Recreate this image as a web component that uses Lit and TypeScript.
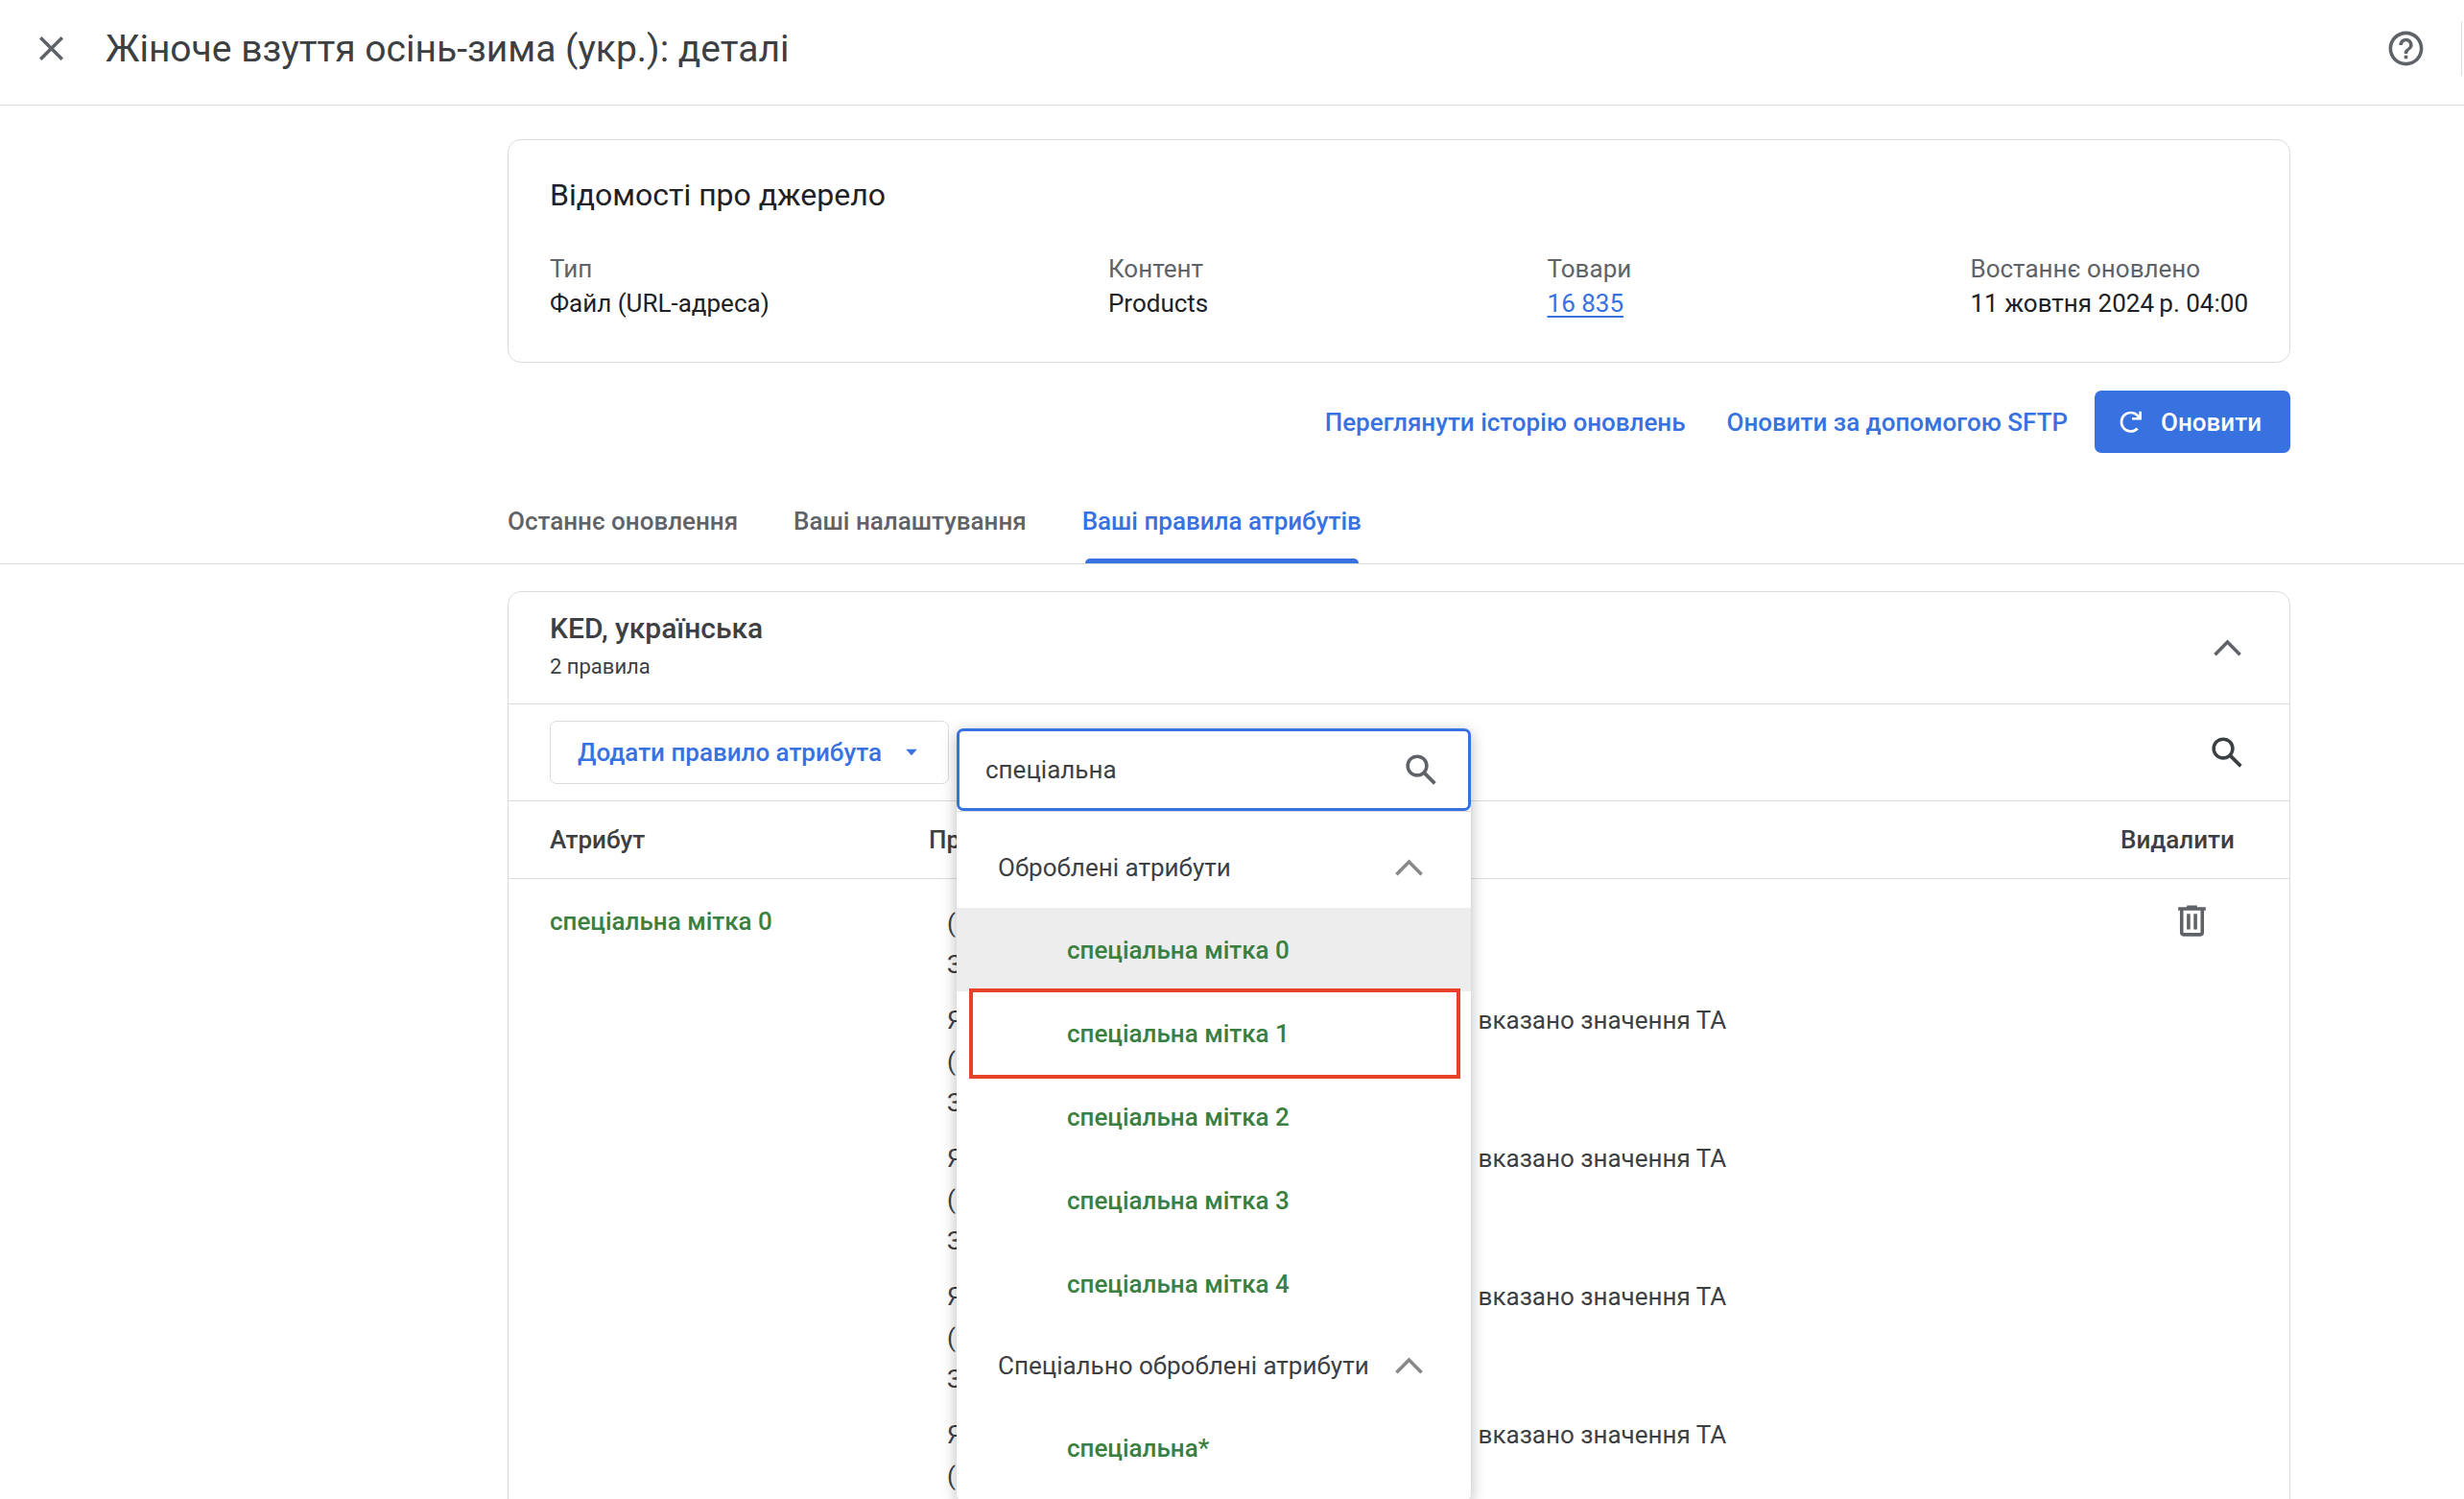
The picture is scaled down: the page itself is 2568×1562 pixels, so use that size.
import { LitElement, html, css, svg } from "lit";
import { customElement } from "lit/decorators.js";

const ICONS = {
  close: "M19 6.41L17.59 5 12 10.59 6.41 5 5 6.41 10.59 12 5 17.59 6.41 19 12 13.41 17.59 19 19 17.59 13.41 12z",
  help: "M11 18h2v-2h-2v2zm1-16C6.48 2 2 6.48 2 12s4.480 10 10 10 10-4.480 10-10S17.520 2 12 2zm0 18c-4.410 0-8-3.590-8-8s3.590-8 8-8 8 3.590 8 8-3.590 8-8 8zm0-14c-2.210 0-4 1.790-4 4h2c0-1.100.9-2 2-2s2 .9 2 2c0 2-3 1.750-3 5h2c0-2.250 3-2.500 3-5 0-2.210-1.790-4-4-4z",
  search: "M20.490 19l-5.730-5.730C15.530 12.200 16 10.910 16 9.500A6.500 6.500 0 1 0 9.500 16c1.410 0 2.700-.47 3.770-1.240L19 20.490 20.490 19zM5 9.500C5 7.010 7.010 5 9.500 5S14 7.010 14 9.500 11.990 14 9.500 14 5 11.990 5 9.500z",
  up: "M18.590 16.410L20 15l-8-8-8 8 1.410 1.410L12 9.830z",
  trash: "M15 4V3H9v1H4v2h1v13c0 1.100.9 2 2 2h10c1.100 0 2-.9 2-2V6h1V4h-5zm2 15H7V6h10v13zM9 8h2v9H9zm4 0h2v9h-2z",
  refresh: "M17 16.9A7.3 7.3 0 1 1 18.2 8.4M19.200 3.500V9.200H12.800",
  down: "M5 8h14l-7 8z",
};

const icon = (name: keyof typeof ICONS, cls = "") =>
  html`<svg class="icon ${cls}" viewBox="0 0 24 24" aria-hidden="true">${svg`<path d=${ICONS[name]}></path>`}</svg>`;

const LABELS = [0, 1, 2, 3, 4].map((n) => `спеціальна мітка ${n}`);

const CONDITIONS = [["(", "З"], ["Я", "(", "З"], ["Я", "(", "З"], ["Я", "(", "З"], ["Я", "("]];

@customElement("attribute-picker")
export class AttributePicker extends LitElement {
  static styles = css`
    :host { display: block; background: #fff; border-radius: 7px; box-shadow: 0 4px 16px rgba(0, 0, 0, 0.28); color: #3c4043; font-size: 26px; padding-bottom: 12px; }
    .icon { width: 43px; height: 43px; fill: currentColor; display: block; }
    .box { display: flex; align-items: center; height: 86px; box-sizing: border-box; border: 3px solid #3871e0; border-radius: 7px; padding: 0 27px; color: #5f6368; }
    input { flex: 1; min-width: 0; border: 0; outline: 0; padding: 0; background: none; font: inherit; color: #3c4043; }
    .list { border-top: 1px solid #dadce0; padding-top: 16px; }
    .group { display: flex; align-items: center; justify-content: space-between; width: 100%; height: 84px; border: 0; background: none; padding: 0 43px; font: inherit; color: inherit; text-align: left; }
    .group .icon { color: #888; }
    .item { display: block; width: 100%; height: 87px; border: 0; background: none; padding: 0 0 0 115px; font: inherit; font-weight: 500; color: #3b8040; text-align: left; }
    .active { background: #ededed; }
    .marked { position: relative; }
    .marked::after { content: ""; position: absolute; inset: -3px 11px -4px 13px; border: 4px solid #ea4228; }
  `;

  render() {
    return html`
      <div class="box"><input type="text" aria-label="Пошук" value="спеціальна" />${icon("search")}</div>
      <div class="list">
        <button class="group">Оброблені атрибути${icon("up")}</button>
        ${LABELS.map((l, i) => html`<button class="item ${i === 0 ? "active" : i === 1 ? "marked" : ""}">${l}</button>`)}
        <button class="group">Спеціально оброблені атрибути${icon("up")}</button>
        <button class="item">спеціальна*</button>
      </div>`;
  }
}

@customElement("app-root")
export class AppRoot extends LitElement {
  static styles = css`
    :host { display: block; height: 100vh; overflow: hidden; background: #fff; color: #3c4043; font-family: Roboto, "Noto Sans", sans-serif; font-size: 26px; line-height: 36px; }
    * { box-sizing: border-box; }
    h1, h2, dl, dd, p { margin: 0; font-weight: 400; }
    button { font: inherit; color: inherit; background: none; border: 0; padding: 0; }
    .icon { width: 43px; height: 43px; fill: currentColor; display: block; }
    .top { display: flex; align-items: center; height: 110px; padding: 0 2px 8px 32px; border-bottom: 1px solid #dadce0; color: #5f6368; }
    .top h1 { flex: 1; margin-left: 35px; font-size: 39px; line-height: 52px; color: #3c4043; }
    .bar { width: 1px; height: 57px; margin-left: 36px; background: #dadce0; }
    .page { padding: 0 181px 0 529px; }
    .card { border: 1px solid #dadce0; border-radius: 14px; }
    .source { margin-top: 35px; padding: 35px 43px 43px; color: #202124; }
    .source h2 { font-size: 32px; line-height: 44px; margin-bottom: 37px; }
    .facts { display: flex; justify-content: space-between; }
    .facts dt { color: #5f6368; }
    .facts a { color: #3871e0; text-underline-offset: 4px; text-decoration-thickness: 2px; }
    .actions { display: flex; justify-content: flex-end; align-items: center; margin-top: 29px; font-weight: 500; color: #3871e0; }
    .actions .link { margin-right: 43px; }
    .actions .link + .link { margin-right: 28px; }
    .actions .primary { display: flex; align-items: center; gap: 15px; height: 65px; padding: 0 30px 0 22px; border-radius: 7px; background: #3871e0; color: #fff; }
    .primary .icon { width: 32px; height: 32px; fill: none; stroke: currentColor; stroke-width: 2; }
    .tabs { display: flex; gap: 58px; height: 116px; padding: 0 181px 0 529px; border-bottom: 1px solid #dadce0; font-weight: 500; color: #5f6368; }
    .tab { position: relative; padding-top: 27px; }
    .tab.on { color: #3871e0; }
    .tab.on::after { content: ""; position: absolute; left: 3px; right: 3px; bottom: 0; height: 5px; border-radius: 5px 5px 0 0; background: #3871e0; }
    .rules { margin-top: 28px; }
    .head { display: flex; align-items: center; justify-content: space-between; height: 117px; padding: 0 43px; border-bottom: 1px solid #dadce0; }
    .head h2 { font-size: 30px; line-height: 40px; font-weight: 500; }
    .head p { font-size: 22px; line-height: 40px; }
    .head .icon { color: #5f6368; }
    .tools { position: relative; display: flex; align-items: center; justify-content: space-between; height: 101px; padding: 0 43px; border-bottom: 1px solid #dadce0; }
    .add { display: flex; align-items: center; gap: 21px; height: 66px; padding: 0 28px; border: 1px solid #dadce0; border-radius: 7px; font-weight: 500; color: #3871e0; }
    .add .icon { width: 20px; height: 20px; }
    attribute-picker { position: absolute; z-index: 2; left: 467px; top: 25px; width: 536px; }
    table { width: 100%; table-layout: fixed; border-collapse: collapse; }
    .c1 { width: 438px; }
    .c3 { width: 176px; }
    th { height: 80px; padding: 0; border-bottom: 1px solid #dadce0; text-align: left; font-weight: 500; }
    th:first-child, td:first-child { padding-left: 43px; }
    td { padding: 0; vertical-align: top; }
    .name { padding-top: 26px; font-weight: 500; color: #3b8040; }
    .conds { padding: 25px 0 0 19px; line-height: 43px; }
    .cond { margin-bottom: 15px; }
    .cond p { display: flex; }
    .tail { margin-left: 537px; }
    .del { padding: 22px 0 0 53px; color: #5f6368; }
  `;

  render() {
    return html`
      <header class="top">
        <button aria-label="Закрити">${icon("close")}</button>
        <h1>Жіноче взуття осінь-зима (укр.): деталі</h1>
        <button aria-label="Довідка">${icon("help")}</button>
        <span class="bar"></span>
      </header>
      <div class="page">
        <section class="card source">
          <h2>Відомості про джерело</h2>
          <dl class="facts">
            <div><dt>Тип</dt><dd>Файл (URL-адреса)</dd></div>
            <div><dt>Контент</dt><dd>Products</dd></div>
            <div><dt>Товари</dt><dd><a href="#">16 835</a></dd></div>
            <div><dt>Востаннє оновлено</dt><dd>11 жовтня 2024&#x2009;р. 04:00</dd></div>
          </dl>
        </section>
        <div class="actions">
          <button class="link">Переглянути історію оновлень</button>
          <button class="link">Оновити за допомогою SFTP</button>
          <button class="primary">${icon("refresh")}Оновити</button>
        </div>
      </div>
      <nav class="tabs">
        <button class="tab">Останнє оновлення</button>
        <button class="tab">Ваші налаштування</button>
        <button class="tab on">Ваші правила атрибутів</button>
      </nav>
      <div class="page">
        <section class="card rules">
          <div class="head">
            <div><h2>KED, українська</h2><p>2 правила</p></div>
            <button aria-label="Згорнути">${icon("up")}</button>
          </div>
          <div class="tools">
            <button class="add">Додати правило атрибута${icon("down")}</button>
            <button aria-label="Пошук">${icon("search")}</button>
            <attribute-picker></attribute-picker>
          </div>
          <table>
            <colgroup><col class="c1" /><col /><col class="c3" /></colgroup>
            <thead><tr><th>Атрибут</th><th>Пр</th><th>Видалити</th></tr></thead>
            <tbody>
              <tr>
                <td><div class="name">спеціальна мітка 0</div></td>
                <td>
                  <div class="conds">
                    ${CONDITIONS.map((lines) => html`<div class="cond">${lines.map((line) => html`<p>${line}${line === "Я" ? html`<span class="tail">вказано значення ТА</span>` : ""}</p>`)}</div>`)}
                  </div>
                </td>
                <td><div class="del"><button aria-label="Видалити">${icon("trash")}</button></div></td>
              </tr>
            </tbody>
          </table>
        </section>
      </div>`;
  }
}
